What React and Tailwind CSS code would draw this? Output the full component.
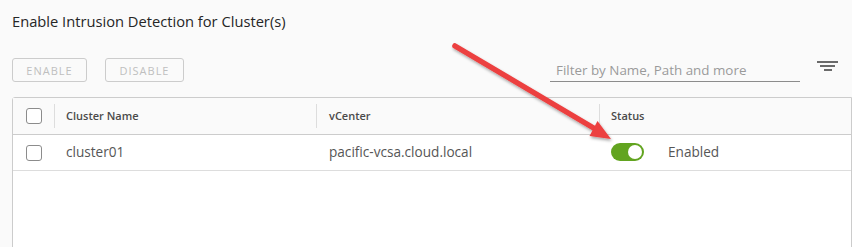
import React from "react";

const font = { fontFamily: "'Open Sans', 'Noto Sans', sans-serif" };

function Checkbox() {
  return <div className="w-4 h-4 rounded-[3px] border border-[#8c8c8c] bg-white" />;
}

export default function App() {
  return (
    <div className="relative w-[852px] h-[247px] bg-[#fafafa] overflow-hidden" style={font}>
      <div className="pl-3 pt-[12px]">
        <div className="text-[14.7px] leading-[18px] font-medium text-[#262626]">
          Enable Intrusion Detection for Cluster(s)
        </div>
        <div className="flex items-end mt-[24px] h-[28px]">
          <button className="w-[75px] h-[24px] border border-[#cccccc] rounded-[3px] text-[11px] tracking-[1px] text-[#bfbfbf] leading-none">
            ENABLE
          </button>
          <button className="ml-[18px] w-[79px] h-[24px] border border-[#cccccc] rounded-[3px] text-[11px] tracking-[1px] text-[#bfbfbf] leading-none">
            DISABLE
          </button>
          <div className="ml-auto w-[250px] h-[28px] border-b border-[#8c8c8c] flex items-center pl-[6px] pt-[5px] text-[13.4px] text-[#9a9a9a] mr-[17px]">
            Filter by Name, Path and more
          </div>
          <div className="w-[21px] h-[12px] mr-[14px] flex flex-col items-center justify-center gap-[2px] self-start mt-[6px]">
            <div className="w-[21px] h-[2px] bg-[#6a6a6a]" />
            <div className="w-[15px] h-[2px] bg-[#6a6a6a]" />
            <div className="w-[8px] h-[2px] bg-[#6a6a6a]" />
          </div>
        </div>
        <div className="mt-[15px] border border-[#cccccc] rounded-tl-[3px] h-[160px] bg-white">
          <div className="flex h-[37px] bg-[#fafafa] border-b border-[#cccccc] items-center text-[11px] font-semibold text-[#4a4a4a]">
            <div className="w-[41px] flex justify-center h-full items-center pl-[1px]">
              <Checkbox />
            </div>
            <div className="w-[262px] h-[24px] border-l border-[#dddddd] flex items-center pl-[11px]">Cluster Name</div>
            <div className="w-[283px] h-[24px] border-l border-[#dddddd] flex items-center pl-[12px]">vCenter</div>
            <div className="flex-1 h-[24px] border-l border-[#dddddd] flex items-center pl-[11px]">Status</div>
          </div>
          <div className="flex h-[36px] border-b border-[#dddddd] items-center text-[13.6px] text-[#565656]">
            <div className="w-[41px] flex justify-center pl-[1px]">
              <Checkbox />
            </div>
            <div className="w-[262px] pl-[12px]">cluster01</div>
            <div className="w-[283px] pl-[13px]">pacific-vcsa.cloud.local</div>
            <div className="flex-1 flex items-center pl-[12px]">
              <div className="w-[33px] h-[18px] rounded-full bg-[#62a420] flex items-center justify-end pr-[2px]">
                <div className="w-[14px] h-[14px] rounded-full bg-white" />
              </div>
              <span className="ml-[24px]">Enabled</span>
            </div>
          </div>
        </div>
      </div>
      <svg className="absolute left-0 top-0 pointer-events-none" width="852" height="247">
        <defs>
          <filter id="sh" x="-20%" y="-20%" width="140%" height="140%">
            <feDropShadow dx="1" dy="2" stdDeviation="1.5" floodColor="#000" floodOpacity="0.35" />
          </filter>
        </defs>
        <g filter="url(#sh)">
          <line x1="455" y1="46" x2="597" y2="130" stroke="#ec3f3f" strokeWidth="5.5" strokeLinecap="round" />
          <polygon points="611,139 597.5,121 589.5,136" fill="#ec3f3f" />
        </g>
      </svg>
    </div>
  );
}
